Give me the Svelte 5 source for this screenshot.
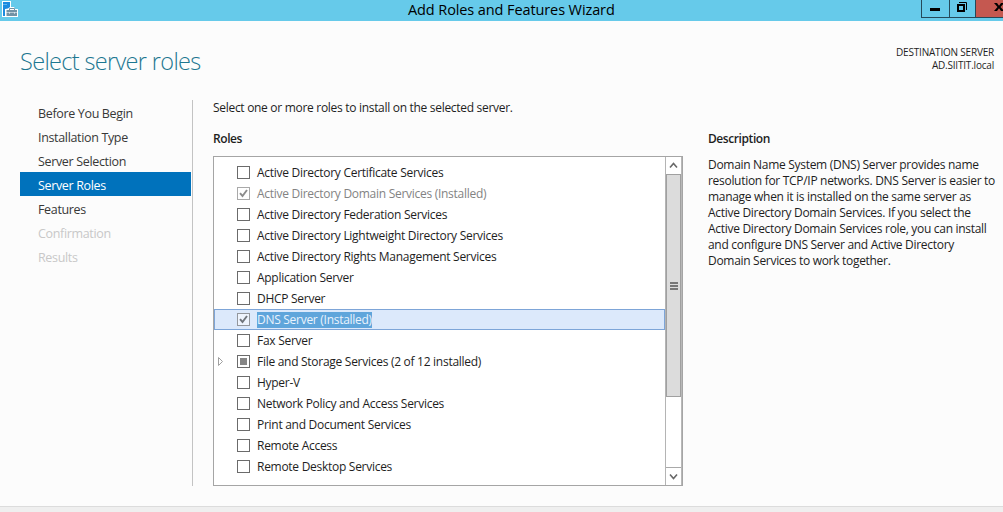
<script>
  const steps = [
    { label: 'Before You Begin' },
    { label: 'Installation Type' },
    { label: 'Server Selection' },
    { label: 'Server Roles', active: true },
    { label: 'Features' },
    { label: 'Confirmation', disabled: true },
    { label: 'Results', disabled: true }
  ];
  const roles = [
    { label: 'Active Directory Certificate Services' },
    { label: 'Active Directory Domain Services (Installed)', checked: true, disabled: true },
    { label: 'Active Directory Federation Services' },
    { label: 'Active Directory Lightweight Directory Services' },
    { label: 'Active Directory Rights Management Services' },
    { label: 'Application Server' },
    { label: 'DHCP Server' },
    { label: 'DNS Server (Installed)', checked: true, selected: true },
    { label: 'Fax Server' },
    { label: 'File and Storage Services (2 of 12 installed)', partial: true },
    { label: 'Hyper-V' },
    { label: 'Network Policy and Access Services' },
    { label: 'Print and Document Services' },
    { label: 'Remote Access' },
    { label: 'Remote Desktop Services' }
  ];
  const description = [
    'Domain Name System (DNS) Server provides name',
    'resolution for TCP/IP networks. DNS Server is easier to',
    'manage when it is installed on the same server as',
    'Active Directory Domain Services. If you select the',
    'Active Directory Domain Services role, you can install',
    'and configure DNS Server and Active Directory',
    'Domain Services to work together.'
  ];
</script>

<div class="window">
  <div class="titlebar">
    <svg class="appicon" width="18" height="18" viewBox="0 0 18 18">
      <path d="M2 1h9v6h3l1 2h3v8H2z" fill="#fff" />
      <path d="M3 2h7v5L8 8.500 5 9v7H3z" fill="#1b8be0" />
      <path d="M3 4.500h4" stroke="#5fb4ee" />
      <path d="M9.500 10V8.500h5V10" fill="none" stroke="#7292a5" />
      <path d="M6.500 10h10.500v2.300H6.500zM6.500 12.800h10.500V16H6.500z" fill="#7292a5" />
      <path d="M9.500 12v1.800M14.500 12v1.800" stroke="#dfe9ef" stroke-width=".8" />
    </svg>
    <span class="title">Add Roles and Features Wizard</span>
    <div class="controls">
      <button class="min" aria-label="Minimize"><svg width="28" height="17" viewBox="0 0 28 17"><path d="M8 8h10v3H8z" /></svg></button>
      <button class="max" aria-label="Restore"><svg width="25" height="17" viewBox="0 0 25 17"><path d="M7 4h8v8H7zM9 6v4h4V6z" fill-rule="evenodd" /><path d="M9 2.500h7.500V10" fill="none" stroke="#000" /></svg></button>
      <button class="close" aria-label="Close"><svg width="27" height="17" viewBox="0 0 27 17"><path d="M18 3h3l2 2.700L25 3h3l-3.500 4L28 11h-3l-2-2.700L21 11h-3l3.500-4z" /></svg></button>
    </div>
  </div>

  <header>
    <h1>Select server roles</h1>
    <div class="dest"><div>DESTINATION SERVER</div><div class="host">AD.SIITIT.local</div></div>
  </header>

  <main>
    <nav>
      {#each steps as step}
        <div class="step" class:active={step.active} class:disabled={step.disabled}><span>{step.label}</span></div>
      {/each}
    </nav>

    <section class="roles">
      <p class="intro">Select one or more roles to install on the selected server.</p>
      <h2>Roles</h2>
      <div class="listbox">
        <div class="items">
          {#each roles as role}
            <div class="row" class:selected={role.selected} class:off={role.disabled}>
              <span class="expander">
                {#if role.partial}
                  <svg width="7" height="11" viewBox="0 0 7 11"><path d="M1.500 1.500v8L5.500 5.500z" fill="#fff" stroke="#a0a0a0" /></svg>
                {/if}
              </span>
              <span class="box" class:tinted={role.selected}>
                {#if role.checked}
                  <svg width="11" height="11" viewBox="0 0 11 11"><path d="M2 5.200L4.500 8 9 2" fill="none" stroke={role.disabled ? '#8c8c8c' : '#70757c'} stroke-width="1.900" /></svg>
                {:else if role.partial}
                  <i></i>
                {/if}
              </span>
              <span class="label">{role.label}</span>
            </div>
          {/each}
        </div>
        <div class="scroll">
          <div class="arrow up"><svg width="9" height="7" viewBox="0 0 9 7"><path d="M1 5.500L4.500 1.500 8 5.500" /></svg></div>
          <div class="thumb"><b></b><b></b><b></b></div>
          <div class="track"></div>
          <div class="arrow down"><svg width="9" height="7" viewBox="0 0 9 7"><path d="M1 1.500L4.500 5.500 8 1.500" /></svg></div>
        </div>
      </div>
    </section>

    <aside>
      <h2>Description</h2>
      <div class="desc">
        {#each description as line}
          <div>{line}</div>
        {/each}
      </div>
    </aside>
  </main>
  <footer></footer>
</div>

<style>
  :global(body) { margin: 0; overflow: hidden; }
  .window {
    width: 1003px; height: 512px; display: flex; flex-direction: column; overflow: hidden;
    background: #fcfcfc; color: #1e1e1e; font: 12px/16px "Open Sans", "Noto Sans", sans-serif; white-space: nowrap;
    letter-spacing: -0.3px;
  }
  h1, h2, p { margin: 0; font-weight: 400; }
  .titlebar { flex: none; height: 21px; background: #66caea; display: grid; grid-template-columns: 408px 1fr 82px; align-items: start; }
  .title { color: #000; font-size: 14.5px; line-height: 19px; letter-spacing: -0.1px; }
  .controls { display: flex; height: 17px; border-bottom: 1px solid #25495a; }
  button { all: unset; height: 17px; border-left: 1px solid #25495a; overflow: hidden; }
  button svg { display: block; }
  .min { width: 27px; }
  .max { width: 25px; }
  .close { width: 27px; background: #c55850; }
  header { flex: none; height: 79px; display: flex; justify-content: space-between; box-sizing: border-box; padding: 23px 9px 0 20px; }
  h1 { font-size: 23.5px; line-height: 34px; font-weight: 300; color: #1d7791; letter-spacing: -0.66px; }
  .dest { font-size: 10px; line-height: 13px; text-align: right; padding-top: 2px; letter-spacing: -0.2px; }
  main { flex: none; height: 406px; display: grid; grid-template-columns: 193px 515px 1fr; align-items: start; }
  nav { box-sizing: border-box; height: 386px; padding: 0 1px 0 20px; border-right: 1px solid #c3c3c3; }
  .step { height: 24px; line-height: 27px; padding-left: 18px; font-size: 12.5px; letter-spacing: -0.34px; color: #383838; }
  .step.active { background: #0072bc; color: #fff; }
  .step.disabled { color: #c8c8c8; }
  .roles { padding-left: 20px; }
  h2 { font-size: 12px; font-weight: 600; line-height: 16px; margin-top: 15px; letter-spacing: -0.42px; }
  aside h2 { margin-top: 31px; }
  .listbox { box-sizing: border-box; width: 470px; height: 330px; margin-top: 9px; border: 1px solid #a5a5a5; background: #fff; display: flex; }
  .items { flex: 1; padding-top: 5px; letter-spacing: -0.28px; }
  .row { box-sizing: border-box; height: 21px; display: flex; align-items: center; border: 1px solid transparent; border-left-width: 0; border-right-width: 0; }
  .selected { background: #dce9fb; border: 1px solid #7da5d8; }
  .expander { width: 23px; display: flex; box-sizing: border-box; padding-left: 3px; }
  .selected .expander { width: 22px; }
  .box { box-sizing: border-box; width: 13px; height: 13px; border: 1px solid #6b6b6b; background: #fff; display: flex; align-items: center; justify-content: center; margin-right: 7px; }
  .box i { width: 7px; height: 7px; background: #868686; }
  .off .box { border-color: #a9a9a9; }
  .box.tinted { background: #eef4fd; border-color: #93979d; }
  .off { color: #838383; }
  .selected .label { background: #5fa5db; color: #e9f3fd; }
  .scroll { width: 17px; display: flex; flex-direction: column; border-left: 1px solid #b4b4b4; box-sizing: border-box; border-right: 1px solid #b8b8b8; }
  .arrow { height: 17px; box-sizing: border-box; display: flex; align-items: center; justify-content: center; }
  .arrow path { fill: none; stroke: #686868; stroke-width: 1.600; }
  .down { height: 18px; border-top: 1px solid #a9a9a9; }
  .thumb { box-sizing: border-box; height: 223px; border: 1px solid #a0a0a0; background: #dcdcdc; display: flex; flex-direction: column; align-items: center; justify-content: center; gap: 1px; }
  .thumb b { width: 8px; height: 2px; background: #777; }
  .track { flex: 1; }
  footer { flex: 1; background: #efefef; border-top: 1px solid #dcdcdc; }
  .desc { margin-top: 10px; }
</style>
